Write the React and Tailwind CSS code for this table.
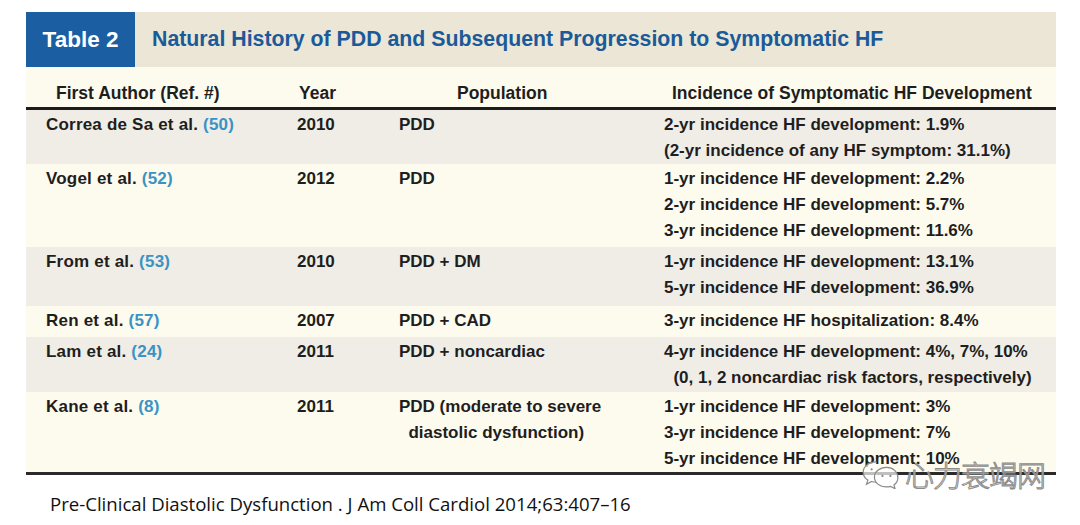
import React from "react";

const ROWS = [
  {
    author: "Correa de Sa et al.",
    ref: "(50)",
    year: "2010",
    population: ["PDD"],
    incidence: ["2-yr incidence HF development: 1.9%", "(2-yr incidence of any HF symptom: 31.1%)"],
    shade: true,
    cls: "h-[54px]",
  },
  {
    author: "Vogel et al.",
    ref: "(52)",
    year: "2012",
    population: ["PDD"],
    incidence: [
      "1-yr incidence HF development: 2.2%",
      "2-yr incidence HF development: 5.7%",
      "3-yr incidence HF development: 11.6%",
    ],
    shade: false,
    cls: "h-[83px]",
  },
  {
    author: "From et al.",
    ref: "(53)",
    year: "2010",
    population: ["PDD + DM"],
    incidence: ["1-yr incidence HF development: 13.1%", "5-yr incidence HF development: 36.9%"],
    shade: true,
    cls: "h-[59px]",
  },
  {
    author: "Ren et al.",
    ref: "(57)",
    year: "2007",
    population: ["PDD + CAD"],
    incidence: ["3-yr incidence HF hospitalization: 8.4%"],
    shade: false,
    cls: "h-[31px]",
  },
  {
    author: "Lam et al.",
    ref: "(24)",
    year: "2011",
    population: ["PDD + noncardiac"],
    incidence: ["4-yr incidence HF development: 4%, 7%, 10%", "\u00a0\u00a0(0, 1, 2 noncardiac risk factors, respectively)"],
    shade: true,
    cls: "h-[55px]",
  },
  {
    author: "Kane et al.",
    ref: "(8)",
    year: "2011",
    population: ["PDD (moderate to severe", "\u00a0\u00a0diastolic dysfunction)"],
    incidence: [
      "1-yr incidence HF development: 3%",
      "3-yr incidence HF development: 7%",
      "5-yr incidence HF development: 10%",
    ],
    shade: false,
    cls: "h-[80px]",
  },
];

const COLS = "grid grid-cols-[271px_102px_265px_1fr]";

function WeChatIcon() {
  return (
    <svg viewBox="0 0 44 32" className="h-[30px] w-[42px]" fill="none" stroke="#8a8a8a" strokeWidth="1.3">
      <path d="M17 3C9 3 3 8 3 14c0 3.5 2 6.5 5 8.5L6.5 27l5.5-3c1.6.5 3.3.8 5 .8" fill="#fff" fillOpacity="0.7" />
      <path d="M28 9c-7.5 0-13 4.6-13 10.4S20.5 29.8 28 29.8c1.5 0 3-.2 4.3-.6l4.7 2.5-1.2-4c2.7-1.9 4.2-4.6 4.2-7.7C40 13.6 35 9 28 9z" fill="#fff" fillOpacity="0.7" />
      <circle cx="23.5" cy="18" r="1.2" fill="#8a8a8a" stroke="none" />
      <circle cx="32" cy="18" r="1.2" fill="#8a8a8a" stroke="none" />
      <circle cx="12" cy="11" r="1.2" fill="#8a8a8a" stroke="none" />
    </svg>
  );
}

export default function App() {
  return (
    <div className="relative h-[525px] w-[1080px] overflow-hidden bg-white font-['Liberation_Sans',Arial,sans-serif] text-[#1e1e1e]">
      <div className="ml-[26px] mt-[12px] w-[1030px]">
        <div className="flex h-[55px] items-stretch bg-[#ebe6d5]">
          <div className="flex w-[109px] items-center justify-center bg-[#1b5ea2] text-[22.5px] font-bold text-white">
            Table 2
          </div>
          <div className="flex items-center pl-[17px] text-[21.3px] font-bold text-[#1b5a99]">
            Natural History of PDD and Subsequent Progression to Symptomatic HF
          </div>
        </div>

        <div className={`${COLS} h-[40px] items-center bg-[#fdfbee] pt-[12px] text-[17.5px] font-bold`}>
          <div className="pl-[30px]">First Author (Ref. #)</div>
          <div className="pl-[2px]">Year</div>
          <div className="pl-[58px]">Population</div>
          <div className="pl-[8px]">Incidence of Symptomatic HF Development</div>
        </div>
        <div className="h-[3px] bg-[#1c1c1c]" />

        {ROWS.map((row) => (
          <div
            key={row.author}
            className={`${COLS} ${row.cls} pt-[2px] text-[17px] font-bold leading-[26px] ${row.shade ? "bg-[#efede6]" : "bg-[#fdfbee]"}`}
          >
            <div className="pl-[20px] tracking-[0.2px]">
              {row.author} <span className="text-[#3a93c4]">{row.ref}</span>
            </div>
            <div>{row.year}</div>
            <div className="whitespace-pre">
              {row.population.map((p) => (
                <div key={p}>{p}</div>
              ))}
            </div>
            <div className="whitespace-pre">
              {row.incidence.map((t) => (
                <div key={t}>{t}</div>
              ))}
            </div>
          </div>
        ))}
        <div className="h-[3px] bg-[#2a2a2a]" />
      </div>

      <div className="ml-[50px] mt-[15px] font-['Open_Sans',sans-serif] text-[18.6px] text-[#111]">
        Pre-Clinical Diastolic Dysfunction . J Am Coll Cardiol 2014;63:407–16
      </div>

      <div className="absolute left-[860px] top-[459px] flex items-center gap-[3px]">
        <WeChatIcon />
        <span className="font-['Noto_Sans_CJK_SC',sans-serif] text-[29px] font-light leading-none tracking-[-1px] text-white/70 [-webkit-text-stroke:1px_#8a8a8a]">
          心力衰竭网
        </span>
      </div>
    </div>
  );
}
